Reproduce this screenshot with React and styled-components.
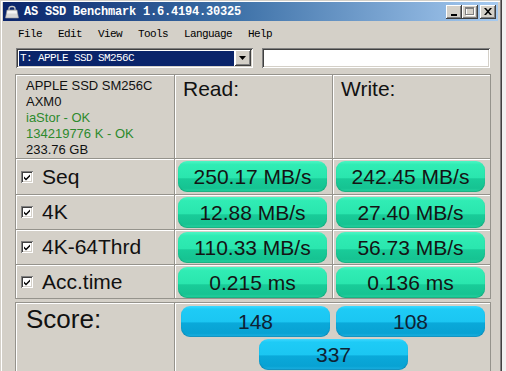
import React from "react";
import styled, { createGlobalStyle, css } from "styled-components";

const Global = createGlobalStyle`
  html, body { margin: 0; padding: 0; background: #f0f0f0; overflow: hidden; }
  #root { width: 506px; height: 371px; overflow: hidden; }
`;

const raised = css`
  box-shadow: inset -1px -1px 0 #404040, inset 1px 1px 0 #ffffff,
    inset -2px -2px 0 #808080, inset 2px 2px 0 #d4d0c8;
`;
const sunken = css`
  box-shadow: inset 1px 1px 0 #808080, inset -1px -1px 0 #ffffff,
    inset 2px 2px 0 #404040, inset -2px -2px 0 #d4d0c8;
`;

const Window = styled.div`
  width: 502px;
  height: 371px;
  box-sizing: border-box;
  padding: 2px 4px 0 3px;
  background: #d4d0c8;
  box-shadow: inset -1px 0 0 #404040, inset -2px 0 0 #808080, inset 1px 1px 0 #d4d0c8,
    inset 2px 2px 0 #ffffff;
  display: flex;
  flex-direction: column;
  overflow: hidden;
  & > * { flex-shrink: 0; }
`;

const TitleBar = styled.div`
  height: 19px;
  display: flex;
  align-items: center;
  background: linear-gradient(90deg, #0a246a 0%, #3a6ea5 45%, #a6caf0 100%);
  padding: 0 2px 0 2px;
`;

const TitleText = styled.span`
  flex: 1;
  margin-left: 5px;
  color: #fff;
  font: bold 12px "Liberation Mono", monospace;
  letter-spacing: -0.2px;
  white-space: nowrap;
`;

const CaptionGroup = styled.div`
  display: flex;
  align-items: center;
`;

const CaptionButton = styled.div`
  width: 16px;
  height: 14px;
  background: #d4d0c8;
  ${raised};
  display: flex;
  align-items: center;
  justify-content: center;
  margin-left: ${(p) => (p.$gap ? "2px" : "0")};
`;

const MenuBar = styled.div`
  height: 23px;
  display: flex;
  align-items: center;
  padding: 3px 0 0 7px;
  box-sizing: border-box;
`;

const MenuItem = styled.span`
  padding: 0 8px;
  font: 11px "Liberation Mono", monospace;
  letter-spacing: -0.6px;
  color: #000;
`;

const Client = styled.div`
  padding: 4px 8px 0 12px;
  display: flex;
  flex-direction: column;
  & > * { flex-shrink: 0; }
`;

const ToolRow = styled.div`
  display: flex;
  align-items: center;
  gap: 9px;
  padding-left: 1px;
  height: 20px;
`;

const Combo = styled.div`
  width: 237px;
  height: 20px;
  box-sizing: border-box;
  background: #fff;
  ${sunken};
  padding: 3px 2px 2px 3px;
  display: flex;
  align-items: stretch;
`;

const ComboValue = styled.div`
  flex: 1;
  background: #0a246a;
  color: #fff;
  font: 11px "Liberation Mono", monospace;
  letter-spacing: -0.6px;
  line-height: 14px;
  padding-left: 1px;
  margin-right: 1px;
  white-space: nowrap;
`;

const ComboArrow = styled.div`
  width: 16px;
  margin-top: -1px;
  background: #d4d0c8;
  ${raised};
  display: flex;
  align-items: center;
  justify-content: center;
`;

const TextBox = styled.div`
  width: 229px;
  height: 20px;
  box-sizing: border-box;
  background: #fff;
  ${sunken};
`;

const Grid = styled.div`
  display: grid;
  grid-template-columns: ${(p) => p.$cols || "158px 157px 157px"};
  grid-template-rows: ${(p) => p.$rows};
  gap: 1px;
  padding: 1px;
  width: 476px;
  box-sizing: border-box;
  background: #95938c;
  margin-top: ${(p) => p.$mt};
`;

const Cell = styled.div`
  background: #d4d0c8;
  box-shadow: inset 1px 1px 0 #ffffff;
  display: flex;
  flex-direction: ${(p) => (p.$col ? "column" : "row")};
  align-items: ${(p) => (p.$center ? "center" : "flex-start")};
  padding: ${(p) => p.$pad || "0"};
  box-sizing: border-box;
  overflow: hidden;
`;

const InfoLine = styled.div`
  font: 13px "Liberation Sans", Arial, sans-serif;
  line-height: 16px;
  color: ${(p) => (p.$ok ? "#2d8a2d" : "#111")};
  white-space: nowrap;
`;

const HeadText = styled.div`
  font: 21px "Liberation Sans", Arial, sans-serif;
  color: #111;
`;

const ScoreLabel = styled.div`
  font: 26px "Liberation Sans", Arial, sans-serif;
  color: #111;
`;

const RowLabel = styled.span`
  font: 21px "Liberation Sans", Arial, sans-serif;
  color: #111;
  margin-left: 9px;
  white-space: nowrap;
`;

const Check = styled.div`
  width: 12px;
  height: 12px;
  box-sizing: border-box;
  background: #fff;
  ${sunken};
  display: flex;
  align-items: center;
  justify-content: center;
  flex-shrink: 0;
`;

const Bar = styled.div`
  width: 149px;
  height: 31px;
  border-radius: 9px;
  display: flex;
  align-items: center;
  justify-content: center;
  font: 21px "Liberation Sans", Arial, sans-serif;
  white-space: nowrap;
  ${(p) =>
    p.$blue
      ? css`
          color: #0f2233;
          background: linear-gradient(
            to bottom,
            #3cd8ff 0%,
            #1ecbf6 10%,
            #1bc6f2 52%,
            #0aa9da 54%,
            #08a2d3 88%,
            #1fb6e6 100%
          );
          box-shadow: inset 0 -1px 1px rgba(0, 80, 120, 0.35);
        `
      : css`
          color: #141414;
          background: linear-gradient(
            to bottom,
            #4cf6c4 0%,
            #30ecb4 12%,
            #2ae6ae 55%,
            #19cc99 57%,
            #16c392 88%,
            #27d8a4 100%
          );
          box-shadow: inset 0 -1px 1px rgba(0, 110, 70, 0.35);
        `}
`;

const BarSlot = styled.div`
  padding: 2px 0 0 3px;
`;

const ScoreArea = styled.div`
  display: grid;
  grid-template-columns: 149px 149px;
  column-gap: 6px;
  row-gap: 2px;
  padding: 3px 0 0 6px;
  justify-items: center;
`;

const ScoreCenter = styled.div`
  grid-column: 1 / span 2;
  margin-left: 1px;
`;

const DriveIcon = () => (
  <svg width="14" height="14" viewBox="0 0 14 14">
    <path d="M4 5 V3.5 Q4 1.5 7 1.5 Q10 1.5 10 3.5 V5" fill="none" stroke="#c8c8c8" strokeWidth="1.3" />
    <path d="M2 5 H12 L13.5 13 H0.5 Z" fill="#d8d8d8" stroke="#9a9a9a" strokeWidth="0.6" />
    <path d="M2.5 6 H11.5 L12 8.5 H2 Z" fill="#f4f4f4" />
  </svg>
);

const CheckMark = () => (
  <svg width="8" height="8" viewBox="0 0 8 8">
    <path d="M1 3.5 L3 5.5 L7 1.5 V3.5 L3 7.5 L1 5.5 Z" fill="#000" />
  </svg>
);

const rows = [
  { name: "Seq", r: "250.17 MB/s", w: "242.45 MB/s" },
  { name: "4K", r: "12.88 MB/s", w: "27.40 MB/s" },
  { name: "4K-64Thrd", r: "110.33 MB/s", w: "56.73 MB/s" },
  { name: "Acc.time", r: "0.215 ms", w: "0.136 ms" },
];

export default function App() {
  return (
    <>
      <Global />
      <Window>
        <TitleBar>
          <DriveIcon />
          <TitleText>AS SSD Benchmark 1.6.4194.30325</TitleText>
          <CaptionGroup>
            <CaptionButton>
              <svg width="8" height="8" viewBox="0 0 8 8">
                <rect x="1" y="6" width="6" height="2" fill="#000" />
              </svg>
            </CaptionButton>
            <CaptionButton>
              <svg width="10" height="9" viewBox="0 0 10 9">
                <rect x="1.5" y="1.5" width="8" height="7" fill="none" stroke="#fff" />
                <rect x="0.5" y="0.5" width="8" height="7" fill="none" stroke="#808080" />
                <rect x="0.5" y="1" width="8" height="1" fill="#808080" />
              </svg>
            </CaptionButton>
            <CaptionButton $gap>
              <svg width="8" height="7" viewBox="0 0 8 7">
                <path d="M0 0 H2 L4 2.3 L6 0 H8 L5 3.5 L8 7 H6 L4 4.7 L2 7 H0 L3 3.5 Z" fill="#000" />
              </svg>
            </CaptionButton>
          </CaptionGroup>
        </TitleBar>
        <MenuBar>
          {["File", "Edit", "View", "Tools", "Language", "Help"].map((m) => (
            <MenuItem key={m}>{m}</MenuItem>
          ))}
        </MenuBar>
        <Client>
          <ToolRow>
            <Combo>
              <ComboValue>T: APPLE SSD SM256C</ComboValue>
              <ComboArrow>
                <svg width="7" height="4" viewBox="0 0 7 4">
                  <path d="M0 0 H7 L3.5 4 Z" fill="#000" />
                </svg>
              </ComboArrow>
            </Combo>
            <TextBox />
          </ToolRow>
          <Grid $rows="83px 35px 34px 34px 33px" $mt="6px">
            <Cell $col $pad="3px 0 0 10px">
              <InfoLine>APPLE SSD SM256C</InfoLine>
              <InfoLine>AXM0</InfoLine>
              <InfoLine $ok>iaStor - OK</InfoLine>
              <InfoLine $ok>134219776 K - OK</InfoLine>
              <InfoLine>233.76 GB</InfoLine>
            </Cell>
            <Cell $pad="2px 0 0 8px">
              <HeadText>Read:</HeadText>
            </Cell>
            <Cell $pad="2px 0 0 8px">
              <HeadText>Write:</HeadText>
            </Cell>
            {rows.map((r) => (
              <React.Fragment key={r.name}>
                <Cell $center $pad="0 0 0 5px">
                  <Check>
                    <CheckMark />
                  </Check>
                  <RowLabel>{r.name}</RowLabel>
                </Cell>
                <Cell>
                  <BarSlot>
                    <Bar>{r.r}</Bar>
                  </BarSlot>
                </Cell>
                <Cell>
                  <BarSlot>
                    <Bar>{r.w}</Bar>
                  </BarSlot>
                </Cell>
              </React.Fragment>
            ))}
          </Grid>
          <Grid $rows="90px" $mt="3px" $cols="158px 315px">
            <Cell $pad="1px 0 0 10px">
              <ScoreLabel>Score:</ScoreLabel>
            </Cell>
            <Cell>
              <ScoreArea>
                <Bar $blue>148</Bar>
                <Bar $blue>108</Bar>
                <ScoreCenter>
                  <Bar $blue>337</Bar>
                </ScoreCenter>
              </ScoreArea>
            </Cell>
          </Grid>
        </Client>
      </Window>
    </>
  );
}
